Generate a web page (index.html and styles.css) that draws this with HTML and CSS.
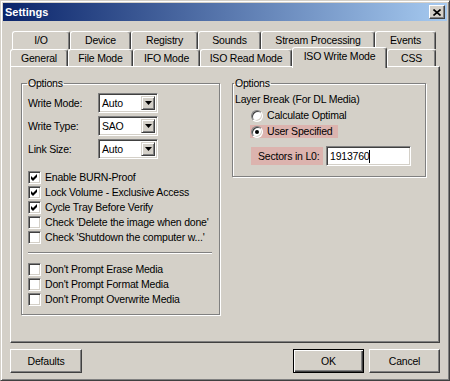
FILE: index.html
```html
<!DOCTYPE html>
<html lang="en">
<head>
    <meta charset="UTF-8">
    <meta name="viewport" content="width=device-width,initial-scale=1.0">
    <title>Settings</title>
    <link rel="stylesheet" href="styles.css">
</head>
<body>
    <div class="window">
        <div class="titlebar">
            <span class="title">Settings</span>
            <span class="close">
                <svg width="8" height="7" viewBox="0 0 8 7"><path d="M0.5 0.5 L7.5 6.5 M7.5 0.5 L0.5 6.5" stroke="#000" stroke-width="1.6"/></svg>
            </span>
        </div>
        <div class="client">
            <div class="tabs">
                <div class="tab-row back">
                    <span class="tab">I/O</span>
                    <span class="tab">Device</span>
                    <span class="tab">Registry</span>
                    <span class="tab">Sounds</span>
                    <span class="tab">Stream Processing</span>
                    <span class="tab">Events</span>
                </div>
                <div class="tab-row front">
                    <span class="tab">General</span>
                    <span class="tab">File Mode</span>
                    <span class="tab">IFO Mode</span>
                    <span class="tab">ISO Read Mode</span>
                    <span class="tab active">ISO Write Mode</span>
                    <span class="tab">CSS</span>
                </div>
            </div>
            <div class="panel">
                <fieldset class="group left-group">
                    <legend>Options</legend>
                    <div class="fields">
                        <div class="field">
                            <span class="field-label">Write Mode:</span>
                            <span class="combo"><span class="combo-value">Auto</span><span class="combo-btn"><svg width="7" height="4" viewBox="0 0 7 4"><path d="M0 0 H7 L3.5 4 Z" fill="#000"/></svg></span></span>
                        </div>
                        <div class="field">
                            <span class="field-label">Write Type:</span>
                            <span class="combo"><span class="combo-value">SAO</span><span class="combo-btn"><svg width="7" height="4" viewBox="0 0 7 4"><path d="M0 0 H7 L3.5 4 Z" fill="#000"/></svg></span></span>
                        </div>
                        <div class="field">
                            <span class="field-label">Link Size:</span>
                            <span class="combo"><span class="combo-value">Auto</span><span class="combo-btn"><svg width="7" height="4" viewBox="0 0 7 4"><path d="M0 0 H7 L3.5 4 Z" fill="#000"/></svg></span></span>
                        </div>
                    </div>
                    <ul class="checks">
                        <li class="check"><span class="box"><svg width="7" height="7" viewBox="0 0 7 7"><path d="M0 2 L2 4 L6 0 V3 L2 7 L0 5 Z" fill="#000"/></svg></span>Enable BURN-Proof</li>
                        <li class="check"><span class="box"><svg width="7" height="7" viewBox="0 0 7 7"><path d="M0 2 L2 4 L6 0 V3 L2 7 L0 5 Z" fill="#000"/></svg></span>Lock Volume - Exclusive Access</li>
                        <li class="check"><span class="box"><svg width="7" height="7" viewBox="0 0 7 7"><path d="M0 2 L2 4 L6 0 V3 L2 7 L0 5 Z" fill="#000"/></svg></span>Cycle Tray Before Verify</li>
                        <li class="check"><span class="box"></span>Check 'Delete the image when done'</li>
                        <li class="check"><span class="box"></span>Check 'Shutdown the computer w...'</li>
                    </ul>
                    <div class="sep"></div>
                    <ul class="checks">
                        <li class="check"><span class="box"></span>Don't Prompt Erase Media</li>
                        <li class="check"><span class="box"></span>Don't Prompt Format Media</li>
                        <li class="check"><span class="box"></span>Don't Prompt Overwrite Media</li>
                    </ul>
                </fieldset>
                <fieldset class="group right-group">
                    <legend>Options</legend>
                    <div class="caption">Layer Break (For DL Media)</div>
                    <div class="radios">
                        <span class="radio"><span class="dot"></span>Calculate Optimal</span>
                        <span class="radio hl"><span class="dot on"></span>User Specified</span>
                    </div>
                    <div class="sectors">
                        <span class="sectors-label">Sectors in L0:</span>
                        <span class="textbox">1913760<span class="caret"></span></span>
                    </div>
                </fieldset>
            </div>
            <div class="buttons">
                <button class="btn">Defaults</button>
                <span class="spacer"></span>
                <button class="btn default">OK</button>
                <button class="btn">Cancel</button>
            </div>
        </div>
    </div>
</body>
</html>
```

FILE: styles.css
```css
*{
    margin: 0;
    padding: 0;
    box-sizing: border-box;
}
body{
    font-family: "Liberation Sans", Arial, sans-serif;
    font-size: 10.5px;
    letter-spacing: -0.2px;
    line-height: 13px;
    color: #000;
    background: #d4d0c8;
}
ul{
    list-style: none;
}
.window{
    width: 450px;
    height: 381px;
    display: flex;
    flex-direction: column;
    background: #d4d0c8;
    border: 1px solid;
    border-color: #d4d0c8 #404040 #404040 #d4d0c8;
    box-shadow: inset 1px 1px 0 #fff, inset -1px -1px 0 #808080;
    padding: 2px;
}
.titlebar{
    height: 18px;
    display: flex;
    align-items: center;
    justify-content: space-between;
    padding: 0 2px 0 2px;
    background: linear-gradient(to right, #0a246a, #a6caf0);
}
.title{
    color: #fff;
    font-size: 11px;
    letter-spacing: 0;
    font-weight: bold;
}
.close{
    width: 16px;
    height: 14px;
    display: flex;
    align-items: center;
    justify-content: center;
    background: #d4d0c8;
    border: 1px solid;
    border-color: #fff #404040 #404040 #fff;
    box-shadow: inset -1px -1px 0 #808080;
}
.client{
    flex: 1;
    display: flex;
    flex-direction: column;
    padding: 10px 7px 5px 7px;
}
.tab-row{
    display: flex;
    align-items: flex-end;
}
.tab-row.back{
    height: 18px;
    margin-left: 2px;
}
.tab-row.front{
    height: 17px;
}
.tab{
    flex: none;
    height: 18px;
    padding-top: 2px;
    text-align: center;
    white-space: nowrap;
    background: #d4d0c8;
    border-top: 1px solid #fff;
    border-left: 1px solid #fff;
    border-right: 1px solid #404040;
    border-radius: 3px 3px 0 0;
    box-shadow: inset -1px 0 0 #808080;
}
/* back row: I/O, Device, Registry, Sounds, Stream Processing, Events */
.back .tab:nth-child(1){ width: 58px; }
.back .tab:nth-child(2){ width: 61px; }
.back .tab:nth-child(3){ width: 67px; }
.back .tab:nth-child(4){ width: 63px; }
.back .tab:nth-child(5){ width: 114px; }
.back .tab:nth-child(6){ width: 61px; }
/* front row: General, File Mode, IFO Mode, ISO Read Mode, ISO Write Mode, CSS */
.front .tab:nth-child(1){ width: 58px; }
.front .tab:nth-child(2){ width: 65px; }
.front .tab:nth-child(3){ width: 67px; }
.front .tab:nth-child(4){ width: 92px; }
.front .tab:nth-child(5){ width: 95px; }
.front .tab:nth-child(6){ width: 49px; }
.front .tab{
    height: 17px;
}
.front .tab.active{
    height: 21px;
    margin-bottom: -2px;
    padding-top: 2px;
    z-index: 1;
}
.panel{
    flex: 1;
    display: flex;
    align-items: flex-start;
    gap: 12px;
    padding: 10px 10px 0 10px;
    border: 1px solid;
    border-color: #fff #404040 #404040 #fff;
    box-shadow: inset -1px -1px 0 #808080;
}
.group{
    border: 1px solid #808080;
    box-shadow: inset 1px 1px 0 #fff, 1px 1px 0 #fff;
}
.group legend{
    padding: 0 1px;
    margin-left: -1px;
}
.left-group{
    width: 199px;
    padding: 3px 7px 7px 6px;
}
.right-group{
    width: 194px;
    padding: 3px 8px 10px 2px;
}
.fields{
    display: flex;
    flex-direction: column;
    gap: 3px;
}
.field{
    display: flex;
    align-items: center;
}
.field-label{
    width: 70px;
}
.combo{
    width: 60px;
    height: 20px;
    display: flex;
    align-items: stretch;
    background: #fff;
    border: 1px solid;
    border-color: #808080 #fff #fff #808080;
    box-shadow: inset 1px 1px 0 #404040, inset -1px -1px 0 #d4d0c8;
    padding: 2px;
}
.combo-value{
    flex: 1;
    padding-left: 1px;
    line-height: 14px;
}
.combo-btn{
    width: 14px;
    display: flex;
    align-items: center;
    justify-content: center;
    background: #d4d0c8;
    border: 1px solid;
    border-color: #d4d0c8 #404040 #404040 #d4d0c8;
    box-shadow: inset 1px 1px 0 #fff, inset -1px -1px 0 #808080;
}
.checks{
    margin-top: 11px;
}
.sep + .checks{
    margin-top: 0;
}
.check{
    height: 15px;
    display: flex;
    align-items: center;
    gap: 4px;
    white-space: nowrap;
}
.box{
    width: 13px;
    height: 13px;
    display: flex;
    align-items: center;
    justify-content: center;
    background: #fff;
    border: 1px solid;
    border-color: #808080 #fff #fff #808080;
    box-shadow: inset 1px 1px 0 #404040, inset -1px -1px 0 #d4d0c8;
}
.sep{
    height: 2px;
    margin: 7px 0 8px;
    border-top: 1px solid #808080;
    border-bottom: 1px solid #fff;
}
.radios{
    display: flex;
    flex-direction: column;
    align-items: flex-start;
    gap: 3px;
    margin: 3px 0 0 15px;
}
.radio{
    height: 13px;
    display: flex;
    align-items: center;
    gap: 4px;
    padding: 0 6px 0 1px;
    white-space: nowrap;
}
.radio.hl,
.sectors-label{
    background: #dcb3ae;
}
.dot{
    width: 12px;
    height: 12px;
    display: flex;
    align-items: center;
    justify-content: center;
    border-radius: 50%;
    background: #fff;
    border: 1px solid;
    border-color: #808080 #fff #fff #808080;
    box-shadow: inset 1px 1px 0 #404040, inset -1px -1px 0 #d4d0c8;
}
.dot.on::after{
    content: "";
    width: 4px;
    height: 4px;
    border-radius: 50%;
    background: #000;
}
.sectors{
    display: flex;
    align-items: center;
    gap: 3px;
    margin: 8px 0 0 16px;
}
.sectors-label{
    width: 72px;
    height: 18px;
    line-height: 18px;
    padding-left: 7px;
    white-space: nowrap;
}
.textbox{
    width: 85px;
    height: 20px;
    display: flex;
    align-items: center;
    padding: 0 3px;
    background: #fff;
    border: 1px solid;
    border-color: #808080 #fff #fff #808080;
    box-shadow: inset 1px 1px 0 #404040, inset -1px -1px 0 #d4d0c8;
}
.caret{
    width: 1px;
    height: 13px;
    background: #000;
}
.buttons{
    display: flex;
    gap: 5px;
    margin-top: 6px;
}
.spacer{
    flex: 1;
}
.btn{
    width: 71px;
    height: 24px;
    font: inherit;
    letter-spacing: inherit;
    color: #000;
    background: #d4d0c8;
    border: 1px solid;
    border-color: #fff #404040 #404040 #fff;
    box-shadow: inset -1px -1px 0 #808080;
}
.btn:first-child{
    width: 72px;
}
.btn.default{
    border-color: #000;
    box-shadow: inset 1px 1px 0 #fff, inset -1px -1px 0 #404040, inset -2px -2px 0 #808080;
}
```
